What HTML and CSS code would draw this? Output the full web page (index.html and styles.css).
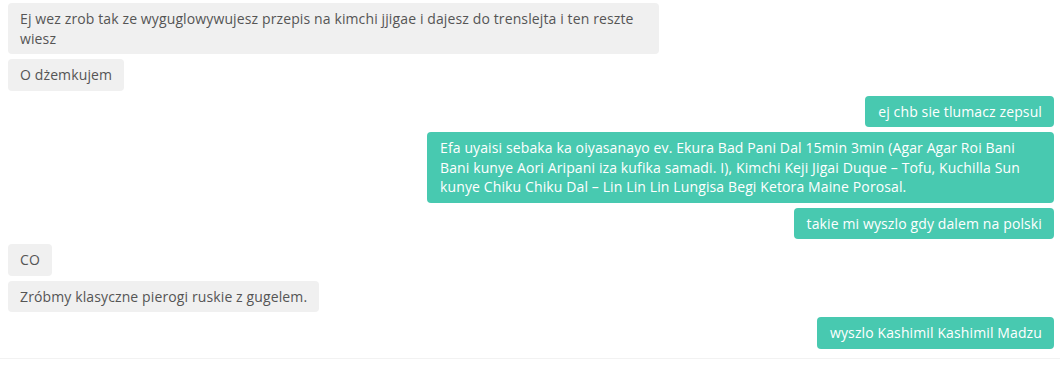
FILE: index.html
```html
<!DOCTYPE html>
<html lang="pl">
<head>
<meta charset="utf-8">
<title>Chat</title>
<link rel="stylesheet" href="styles.css">
</head>
<body>
<div class="chat">
  <div class="messages">
    <div class="msg in">Ej wez zrob tak ze wyguglowywujesz przepis na kimchi jjigae i dajesz do trenslejta i ten reszte wiesz</div>
    <div class="msg in">O dżemkujem</div>
    <div class="msg out">ej chb sie tlumacz zepsul</div>
    <div class="msg out">Efa uyaisi sebaka ka oiyasanayo ev. Ekura Bad Pani Dal 15min 3min (Agar Agar Roi Bani Bani kunye Aori Aripani iza kufika samadi. I), Kimchi Keji Jigai Duque – Tofu, Kuchilla Sun kunye Chiku Chiku Dal – Lin Lin Lin Lungisa Begi Ketora Maine Porosal.</div>
    <div class="msg out">takie mi wyszlo gdy dalem na polski</div>
    <div class="msg in">CO</div>
    <div class="msg in">Zróbmy klasyczne pierogi ruskie z gugelem.</div>
    <div class="msg out">wyszlo Kashimil Kashimil Madzu</div>
  </div>
  <div class="footer"></div>
</div>
</body>
</html>
```
FILE: styles.css
```css
html, body {
  margin: 0;
  padding: 0;
  background: #ffffff;
}
body {
  font-family: "Open Sans", "Liberation Sans", sans-serif;
  font-size: 14px;
  line-height: 19.5px;
  letter-spacing: 0.12px;
}
.chat {
  width: 1060px;
}
.messages {
  display: flex;
  flex-direction: column;
  align-items: flex-start;
  gap: 5px;
  padding: 3px 6px 0 8px;
  height: 358px;
  box-sizing: border-box;
}
.msg {
  max-width: 651px;
  box-sizing: border-box;
  padding: 6px 12px;
  border-radius: 4px;
}
.msg.in {
  background: #f0f0f0;
  color: #555555;
}
.msg.out {
  max-width: 627px;
  align-self: flex-end;
  background: #48c9b0;
  color: #ffffff;
  padding: 6px 12px 6px 13px;
}
.footer {
  border-top: 1px solid #f2f2f2;
  height: 6px;
}
```
